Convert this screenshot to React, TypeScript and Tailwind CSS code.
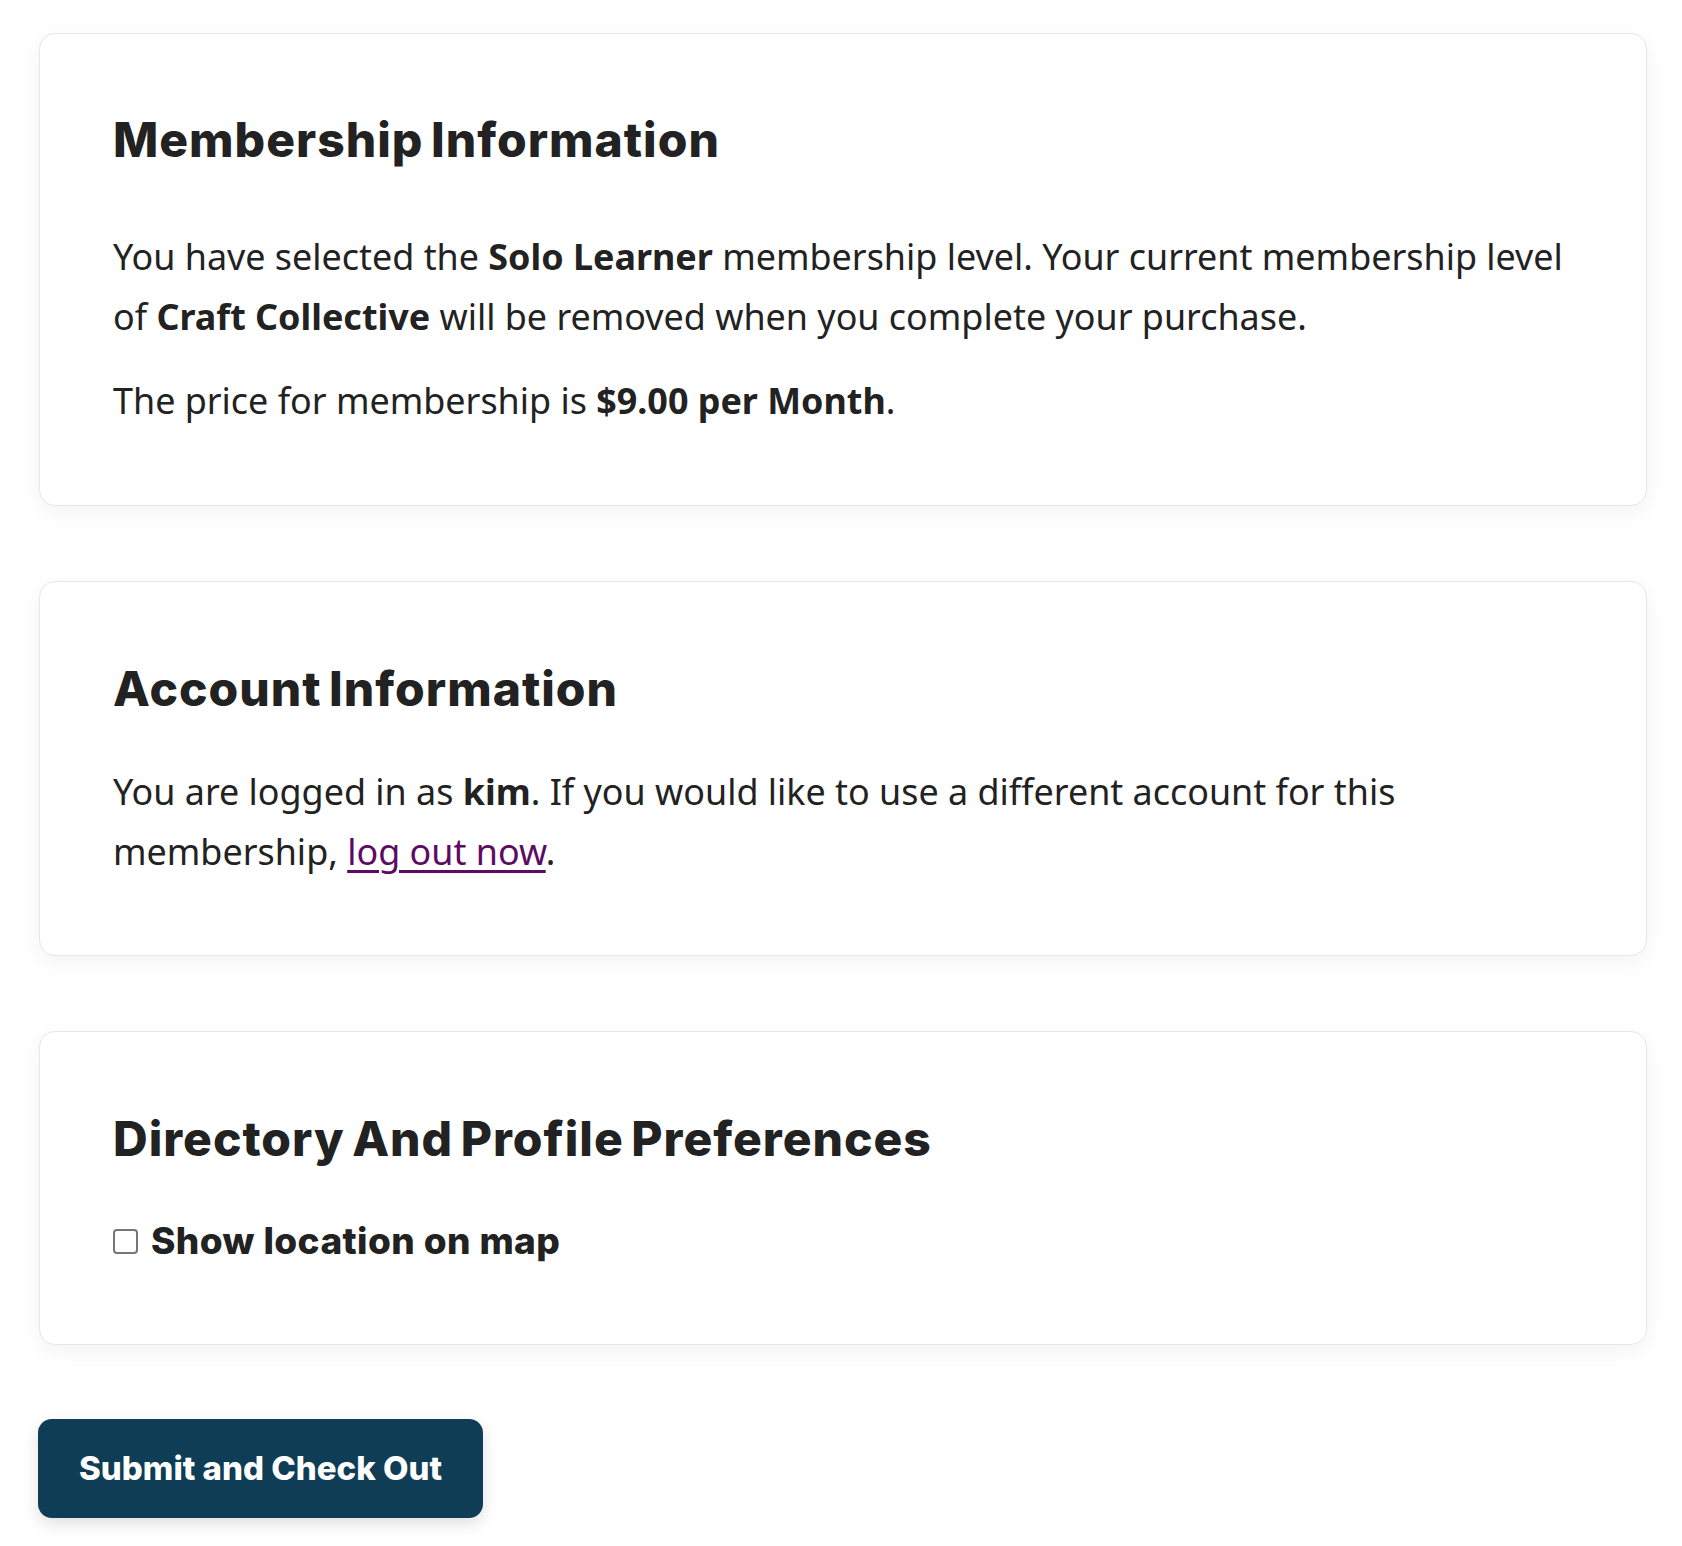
import React from "react";

const body = "font-['Noto_Sans',sans-serif] text-[35.9px] leading-[60px] text-[#222222]";
const head = "font-['Inter',sans-serif] font-extrabold text-[48px] leading-[58px] tracking-[1px] [word-spacing:-4px] text-[#222222]";

export default function App() {
  return (
    <div className="min-h-[1546px] bg-white pt-[33px] pl-[39px] pr-[35px]">
      <div className="flex flex-col gap-[75px]">
        <section className="rounded-[16px] border border-[#e1e9e9] bg-white pl-[73px] pr-[73px] pt-[77px] pb-[74px] shadow-[0_6px_22px_rgba(0,0,0,0.05)]">
          <h2 className={head}>Membership Information</h2>
          <p className={`${body} mt-[58px]`}>
            You have selected the <strong className="font-bold">Solo Learner</strong> membership level. Your current membership level of{" "}
            <strong className="font-bold">Craft Collective</strong> will be removed when you complete your purchase.
          </p>
          <p className={`${body} mt-[24px]`}>
            The price for membership is <strong className="font-bold">$9.00 per Month</strong>.
          </p>
        </section>

        <section className="rounded-[16px] border border-[#e1e9e9] bg-white pl-[73px] pr-[73px] pt-[78px] pb-[73px] shadow-[0_6px_22px_rgba(0,0,0,0.05)]">
          <h2 className={head}>Account Information</h2>
          <p className={`${body} mt-[44px]`}>
            You are logged in as <strong className="font-bold">kim</strong>. If you would like to use a different account for this membership,{" "}
            <a href="#" className="text-[#5e0a63] underline decoration-[2.5px] underline-offset-[5px]">log out now</a>.
          </p>
        </section>

        <section className="rounded-[16px] border border-[#e1e9e9] bg-white pl-[73px] pr-[73px] pt-[78px] pb-[79px] shadow-[0_6px_22px_rgba(0,0,0,0.05)]">
          <h2 className={head}>Directory And Profile Preferences</h2>
          <label className="mt-[49px] flex items-center gap-[13px] font-['Inter',sans-serif] text-[37px] font-extrabold leading-[48px] tracking-[0.4px] text-[#222222]">
            <input type="checkbox" className="m-0 h-[25px] w-[25px] appearance-none rounded-[4px] border-2 border-[#767676] bg-white" />
            <span>Show location on map</span>
          </label>
        </section>
      </div>

      <button className="mt-[74px] flex h-[99px] w-[445px] -ml-[1px] items-center justify-center rounded-[14px] bg-[#0e3d55] font-['Inter',sans-serif] text-[33px] font-extrabold text-white shadow-[0_6px_16px_rgba(0,0,0,0.12)]">
        Submit and Check Out
      </button>
    </div>
  );
}
